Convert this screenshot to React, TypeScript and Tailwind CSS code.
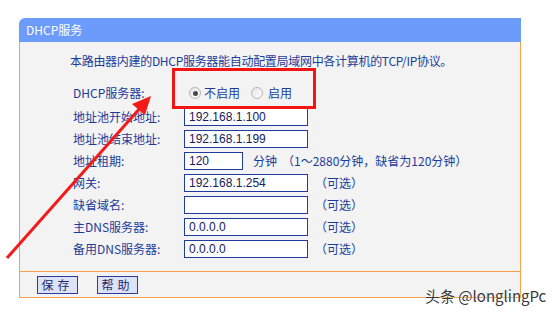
const rows = [
  { label: '地址池开始地址:', value: '192.168.1.100', note: '' },
  { label: '地址池结束地址:', value: '192.168.1.199', note: '' },
  { label: '地址租期:', value: '120', note: 'lease' },
  { label: '网关:', value: '192.168.1.254', note: '（可选）' },
  { label: '缺省域名:', value: '', note: '（可选）' },
  { label: '主DNS服务器:', value: '0.0.0.0', note: '（可选）' },
  { label: '备用DNS服务器:', value: '0.0.0.0', note: '（可选）' },
]

const Radio = ({ checked }: { checked?: boolean }) => (
  <span className="flex h-[12px] w-[12px] items-center justify-center rounded-full border border-[#b5b5b5] bg-gradient-to-br from-[#e6e6e6] to-[#fdfdfd]">
    {checked && <span className="h-[5px] w-[5px] rounded-full bg-[#4a4a4a]" />}
  </span>
)

const App = () => {
  return (
    <div className="relative h-[314px] w-[553px] overflow-hidden bg-white font-['Noto_Sans_CJK_SC',sans-serif] text-[12px] text-[#1b3c9a]">
      <div className="pl-[19px] pt-[18px]">
        <div className="w-[502px]">
          {/* header */}
          <div className="h-[24px] rounded-tl-[6px] bg-[#6b9bfb] pl-[7px] leading-[24px] text-white">DHCP服务</div>

          {/* body */}
          <div className="border-x border-[#f7a24a] bg-[#f3f3f3] pb-[11px] pt-[11px]">
            <p className="pl-[50px] leading-[16px] tracking-[-0.3px]">本路由器内建的DHCP服务器能自动配置局域网中各计算机的TCP/IP协议。</p>
            <div className="mt-[11px] pl-[53px]">
              <div className="flex h-[26px] items-center">
                <span className="w-[111px]">DHCP服务器:</span>
                <div className="ml-[5px] flex items-center">
                  <Radio checked />
                  <span className="ml-[3px]">不启用</span>
                  <span className="ml-[11px]"><Radio /></span>
                  <span className="ml-[5px]">启用</span>
                </div>
              </div>
              {rows.map((r, i) => (
                <div key={i} className="flex h-[22px] items-center">
                  <span className="w-[111px]">{r.label}</span>
                  <div className={`h-[18px] ${r.note === 'lease' ? 'w-[59px]' : 'w-[124px]'} border border-[#1d3c9c] bg-white pl-[4px] font-['Liberation_Sans',sans-serif] leading-[16px] text-[#15205a]`}>
                    {r.value}
                  </div>
                  {r.note === 'lease' && (
                    <>
                      <span className="ml-[10px]">分钟</span>
                      <span className="ml-[5px]">（1～2880分钟，缺省为120分钟）</span>
                    </>
                  )}
                  {r.note && r.note !== 'lease' && <span className="ml-[7px]">{r.note}</span>}
                </div>
              ))}
            </div>
          </div>

          {/* footer */}
          <div className="flex h-[27px] items-center gap-[19px] border border-[#f7a24a] bg-[#f3f3f3] pl-[17px]">
            <button className="h-[18px] w-[41px] border border-[#2a3c9e] bg-[#dde2f7] text-[12px] leading-[16px] tracking-[4px] text-[#1b2a6e]">保存</button>
            <button className="h-[18px] w-[41px] border border-[#2a3c9e] bg-[#dde2f7] text-[12px] leading-[16px] tracking-[4px] text-[#1b2a6e]">帮助</button>
          </div>
        </div>
      </div>

      {/* red annotation box */}
      <div className="absolute left-[172px] top-[68px] h-[41px] w-[144px] border-[3px] border-[#f31414]" />

      {/* red arrow */}
      <svg className="absolute left-0 top-0" width="553" height="314">
        <line x1="7" y1="258" x2="141" y2="107" stroke="#f31a1a" strokeWidth="3" />
        <polygon points="151,96 132,104 145,115" fill="#f31a1a" />
      </svg>

      {/* watermark */}
      <div className="absolute left-[425px] top-[286px] font-['Noto_Sans_CJK_SC',sans-serif] text-[15px] leading-[20px] text-[#3a3a3a] [text-shadow:0_0_2px_#fff]">
        头条 @longlingPc
      </div>
    </div>
  )
}

export default App
